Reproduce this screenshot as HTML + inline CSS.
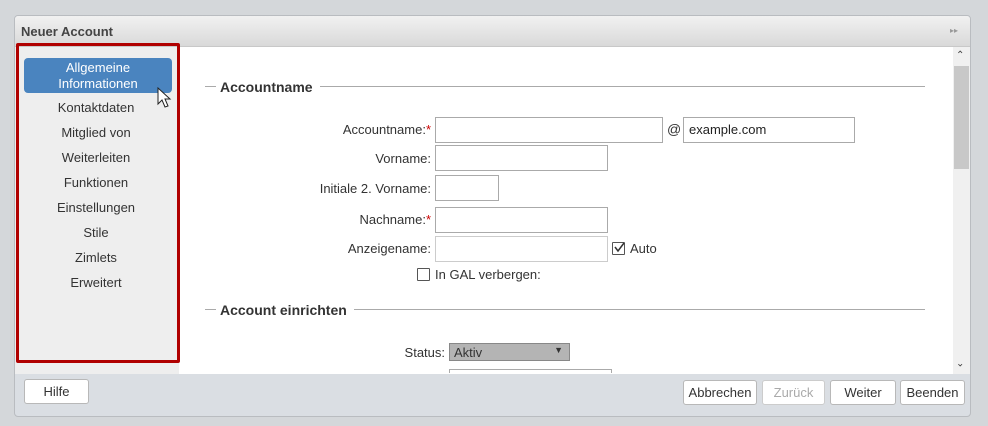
<!DOCTYPE html>
<html><head><meta charset="utf-8"><style>
*{box-sizing:border-box}
body{margin:0;width:988px;height:426px;background:#d4d7da;font-family:"Liberation Sans",Arial,sans-serif;font-size:13px;color:#333;position:relative;overflow:hidden}
.abs{position:absolute}
.dlg{left:14px;top:15px;width:957px;height:402px;background:#dadee3;border:1px solid #b9bcc0;border-radius:4px;overflow:hidden}
.title{left:0;top:0;width:100%;height:31px;background:linear-gradient(#f1f1f1,#d9d9d9);border-bottom:1px solid #c8c8c8}
.title span{position:absolute;left:6px;top:8px;font-weight:bold;font-size:13px;color:#444}
.nav{left:0;top:31px;width:164px;height:327px;background:#eeeeee}
.red{left:16px;top:43px;width:164px;height:320px;border:3px solid #b00000;border-radius:2px}
.item{position:absolute;left:0;width:164px;text-align:center;font-size:13px;color:#333}
.sel{left:24px;top:58px;width:148px;height:35px;background:#4a84bf;border-radius:4px;color:#fff;text-align:center;font-size:13px;line-height:16px;padding-top:2px}
.content{left:164px;top:31px;width:774px;height:327px;background:#fff}
.sb{left:938px;top:31px;width:18px;height:327px;background:#f0f0f0}
.thumb{left:939px;top:50px;width:15px;height:103px;background:#c8c8c8}
.lbl{text-align:right;width:200px;font-size:13px;color:#333}
.in{border:1px solid #aaa;background:#fff;height:26px}
.hdr{font-weight:bold;font-size:14px;color:#333}
.line{height:1px;background:#aaa}
.btn{height:25px;border:1px solid #b8b8b8;border-radius:3px;background:#fff;text-align:center;line-height:23px;font-size:13px;color:#333}
.cb{width:13px;height:13px;border:1px solid #555;background:#fff;border-radius:1px}
</style></head><body>
<div class="abs dlg">
 <div class="abs title"><span>Neuer Account</span><span style="left:935px;top:10px;font-size:8px;color:#999;font-weight:normal">▸▸</span></div>
 <div class="abs nav"></div>
 <div class="abs content"></div>
 <div class="abs sb"></div>
 <div class="abs thumb"></div>
 <div class="abs" style="left:941px;top:34px;font-size:10px;color:#444">&#8963;</div>
 <div class="abs" style="left:941px;top:340px;font-size:10px;color:#444;transform:rotate(180deg)">&#8963;</div>
</div>
<div class="abs red"></div>
<div class="abs sel">Allgemeine<br>Informationen</div>
<svg class="abs" style="left:157px;top:87px" width="16" height="22" viewBox="0 0 16 22"><path d="M1 1 L1 17 L5 13 L8 20 L11 19 L8 12 L13 12 Z" fill="#fff" stroke="#222" stroke-width="1"/></svg>
<div class="item" style="left:14px;top:100px">Kontaktdaten</div>
<div class="item" style="left:14px;top:125px">Mitglied von</div>
<div class="item" style="left:14px;top:150px">Weiterleiten</div>
<div class="item" style="left:14px;top:175px">Funktionen</div>
<div class="item" style="left:14px;top:200px">Einstellungen</div>
<div class="item" style="left:14px;top:225px">Stile</div>
<div class="item" style="left:14px;top:250px">Zimlets</div>
<div class="item" style="left:14px;top:275px">Erweitert</div>

<div class="abs line" style="left:205px;top:86px;width:11px"></div>
<div class="abs hdr" style="left:220px;top:79px">Accountname</div>
<div class="abs line" style="left:320px;top:86px;width:605px"></div>

<div class="abs lbl" style="left:231px;top:122px">Accountname:<span style="color:#c00">*</span></div>
<div class="abs in" style="left:435px;top:117px;width:228px"></div>
<div class="abs" style="left:667px;top:121px;font-size:14px">@</div>
<div class="abs in" style="left:683px;top:117px;width:172px;padding:4px 5px;font-size:13px;color:#222">example.com</div>

<div class="abs lbl" style="left:231px;top:151px">Vorname:</div>
<div class="abs in" style="left:435px;top:145px;width:173px"></div>
<div class="abs lbl" style="left:231px;top:181px">Initiale 2. Vorname:</div>
<div class="abs in" style="left:435px;top:175px;width:64px"></div>
<div class="abs lbl" style="left:231px;top:212px">Nachname:<span style="color:#c00">*</span></div>
<div class="abs in" style="left:435px;top:207px;width:173px"></div>
<div class="abs lbl" style="left:231px;top:241px">Anzeigename:</div>
<div class="abs in" style="left:435px;top:236px;width:173px;border-color:#ccc"></div>
<div class="abs cb" style="left:612px;top:242px"></div>
<svg class="abs" style="left:613px;top:241px" width="13" height="13"><path d="M2 6 L5 10 L11 2" stroke="#333" stroke-width="1.5" fill="none"/></svg>
<div class="abs" style="left:630px;top:241px">Auto</div>
<div class="abs cb" style="left:417px;top:268px"></div>
<div class="abs" style="left:435px;top:267px">In GAL verbergen:</div>

<div class="abs line" style="left:205px;top:309px;width:11px"></div>
<div class="abs hdr" style="left:220px;top:302px">Account einrichten</div>
<div class="abs line" style="left:354px;top:309px;width:571px"></div>

<div class="abs lbl" style="left:245px;top:345px">Status:</div>
<div class="abs" style="left:449px;top:343px;width:121px;height:18px;background:#b4b4b4;border:1px solid #888;padding:1px 4px;font-size:13px;color:#333">Aktiv<span style="position:absolute;right:6px;top:1px;font-size:9px">▼</span></div>
<div class="abs" style="left:449px;top:369px;width:163px;height:4px;border:1px solid #aaa;border-bottom:none"></div>

<div class="abs btn" style="left:24px;top:379px;width:65px">Hilfe</div>
<div class="abs btn" style="left:683px;top:380px;width:74px">Abbrechen</div>
<div class="abs btn" style="left:762px;top:380px;width:63px;color:#aaa;border-color:#ccc">Zurück</div>
<div class="abs btn" style="left:830px;top:380px;width:66px">Weiter</div>
<div class="abs btn" style="left:900px;top:380px;width:65px">Beenden</div>
</body></html>
